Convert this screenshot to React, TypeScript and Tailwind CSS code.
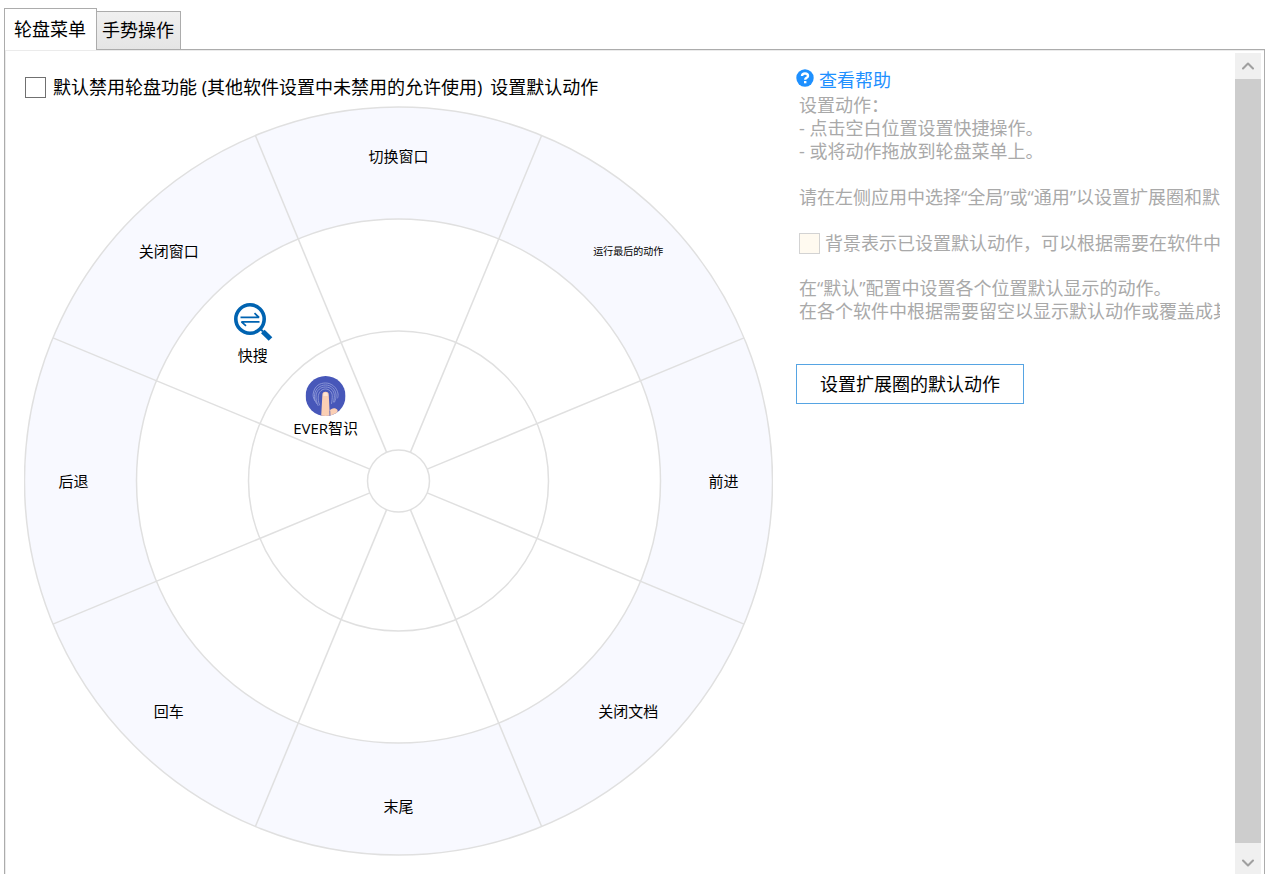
import { useState } from 'react'
import { ChevronDown, ChevronUp } from 'lucide-react'

const CX = 374.5
const CY = 375
const RINGS = [31, 150, 262]
const OUTER = 374
const SPOKES = [22.5, 67.5, 112.5, 157.5, 202.5, 247.5, 292.5, 337.5]

interface WheelItem {
  name: string
  angle: number // degrees, clockwise from the top
  radius: number
  icon?: 'search' | 'touch'
  small?: boolean
}

const items: WheelItem[] = [
  { name: '切换窗口', angle: 0, radius: 325 },
  { name: '运行最后的动作', angle: 45, radius: 325, small: true },
  { name: '前进', angle: 90, radius: 325 },
  { name: '关闭文档', angle: 135, radius: 325 },
  { name: '末尾', angle: 180, radius: 325 },
  { name: '回车', angle: 225, radius: 325 },
  { name: '后退', angle: 270, radius: 325 },
  { name: '关闭窗口', angle: 315, radius: 325 },
  { name: '快搜', angle: 315, radius: 206, icon: 'search' },
  { name: 'EVER智识', angle: 315, radius: 103, icon: 'touch' },
]

function polar(angle: number, radius: number) {
  const rad = (angle * Math.PI) / 180
  return { x: CX + radius * Math.sin(rad), y: CY - radius * Math.cos(rad) }
}

function SearchIcon() {
  return (
    <svg className="w-10 h-10" viewBox="0 0 40 40" fill="none" stroke="#0063b1" aria-hidden="true">
      <circle cx="17" cy="16" r="14.2" strokeWidth="3.6" />
      <path d="M29.800 28.500 37.500 36" strokeWidth="5.200" />
      <path d="M27 25.500 30 28.500" strokeWidth="2" />
      <path d="M7.500 14.300h18.500L21.500 10.200" strokeWidth="1.700" strokeLinejoin="bevel" />
      <path d="M26.500 18.900H8.500l4.500 4" strokeWidth="1.700" strokeLinejoin="bevel" />
    </svg>
  )
}

function TouchIcon() {
  return (
    <svg className="w-10 h-10" viewBox="0 0 40 40" fill="none" aria-hidden="true">
      <defs>
        <clipPath id="touch-clip">
          <circle cx="20" cy="20" r="20" />
        </clipPath>
      </defs>
      <circle cx="20" cy="20" r="20" fill="#4757b9" />
      <g stroke="#98a2dc" strokeWidth="0.8" strokeLinecap="round">
        <path d="M9.500 25c-2-3-2.500-6-1.500-9C9.500 10 14 7 20 7s11.500 4.500 12.500 11c0 2 0 3-.5 4" />
        <path d="M11 27.500c-2-3-2.500-6-2-9 1-6 5.500-9.500 11-9.500s10 4 10.500 10c0 3-.5 4-1.500 7" />
        <path d="M12.500 29.500c-1.500-3-2.500-7-2-10.500 1-5 4.500-8 9.500-8s8.500 3.500 8.800 8.500c0 3-.3 4-.8 6.500" />
        <path d="M14 29c-1.200-3-1.700-6-1.200-9.500.8-4 3.700-6.500 7.200-6.500s6.500 3 6.700 6.500c0 3-.2 5-.7 8" />
      </g>
      <g clipPath="url(#touch-clip)" fill="#fbcfb4">
        <path d="M15.500 42 16.800 19a3.200 3.200 0 0 1 6.400 0l.8 15.500C25.500 32 30 31 32 34v8z" />
        <path d="M17.800 20v-1.200a2.200 2.200 0 0 1 4.400 0V20z" fill="#fde4d3" />
        <path d="M24.200 34.500 24.500 42" stroke="#4757b9" strokeWidth="0.800" />
      </g>
    </svg>
  )
}

function HelpIcon() {
  return (
    <svg className="w-[18px] h-[18px]" viewBox="0 0 18 18" fill="none" aria-hidden="true">
      <circle cx="9" cy="9" r="8.700" fill="#1e90ff" />
      <path d="M6 7C6.100 5.200 7.400 4.500 9 4.500s3 .9 3 2.400c0 2-2.800 1.900-2.800 3.800" stroke="#fff" strokeWidth="2.400" />
      <path d="M8 12h2.400v2.300H8z" fill="#fff" />
    </svg>
  )
}

function Wheel() {
  return (
    <div className="relative w-[749px] h-[750px]">
      <svg className="w-full h-full" viewBox="0 0 749 750" fill="none" stroke="#e0e0e0" strokeWidth="1.500" aria-hidden="true">
        <circle cx={CX} cy={CY} r={OUTER} fill="#f8f9ff" />
        <circle cx={CX} cy={CY} r={RINGS[2]} fill="#fff" />
        <circle cx={CX} cy={CY} r={RINGS[1]} />
        <circle cx={CX} cy={CY} r={RINGS[0]} />
        {SPOKES.map((angle) => {
          const from = polar(angle, RINGS[0])
          const to = polar(angle, OUTER)
          return <line key={angle} x1={from.x} y1={from.y} x2={to.x} y2={to.y} />
        })}
      </svg>
      {items.map((item) => {
        const { x, y } = polar(item.angle, item.radius)
        return (
          <button
            key={item.name}
            type="button"
            className={`absolute -translate-x-1/2 -translate-y-1/2 flex flex-col items-center whitespace-nowrap ${
              item.small ? 'text-[10px] leading-4' : 'text-[15px] leading-6'
            }`}
            style={{ left: x, top: y }}
          >
            {item.icon === 'search' && <SearchIcon />}
            {item.icon === 'touch' && <TouchIcon />}
            {item.name}
          </button>
        )
      })}
    </div>
  )
}

function HelpPanel() {
  return (
    <div className="flex-1 min-w-0 overflow-hidden whitespace-nowrap pt-4">
      <a href="#help" className="flex items-start gap-[5px] pb-[2px] leading-[23px] text-[#1e90ff]">
        <HelpIcon />
        查看帮助
      </a>
      <div className="pl-[3px] leading-[23px] text-[#a9a9a9]">
        <p>设置动作：</p>
        <p>- 点击空白位置设置快捷操作。</p>
        <p>- 或将动作拖放到轮盘菜单上。</p>
        <p className="mt-[23px]">请在左侧应用中选择“全局”或“通用”以设置扩展圈和默认动作。</p>
        <p className="mt-[23px] flex items-center gap-[5px]">
          <span className="w-[21px] h-[21px] shrink-0 border border-[#d3d3d3] bg-[#fffaf0]"></span>
          背景表示已设置默认动作，可以根据需要在软件中覆盖。
        </p>
        <p className="mt-[22px]">在“默认”配置中设置各个位置默认显示的动作。</p>
        <p>在各个软件中根据需要留空以显示默认动作或覆盖成其他动作。</p>
      </div>
      <button type="button" className="mt-[41px] h-10 px-[23px] border border-[#56a4e3] bg-white">
        设置扩展圈的默认动作
      </button>
    </div>
  )
}

function ScrollBar() {
  return (
    <div className="w-[26px] shrink-0 flex flex-col bg-[#f0f0f0] text-[#a0a0a0]">
      <button type="button" aria-label="向上滚动" className="h-[26px] flex items-center justify-center">
        <ChevronUp size={20} strokeWidth={2.5} />
      </button>
      <div className="flex-1 bg-[#cdcdcd]"></div>
      <button type="button" aria-label="向下滚动" className="h-[31px] pt-2 flex items-center justify-center">
        <ChevronDown size={20} strokeWidth={2.5} />
      </button>
    </div>
  )
}

export default function App() {
  const [disabled, setDisabled] = useState(false)

  return (
    <div
      lang="zh-CN"
      className="h-screen overflow-hidden flex flex-col bg-white pt-2 pl-1 pr-[6px] text-[18px] text-black font-['Open_Sans','Noto_Sans_CJK_SC',sans-serif]"
    >
      <div role="tablist" className="flex items-end shrink-0">
        <button
          type="button"
          role="tab"
          aria-selected="true"
          className="relative z-10 -mb-px h-[42px] pl-[9px] pr-[10px] border border-b-0 border-[#acacac] bg-white"
        >
          轮盘菜单
        </button>
        <button
          type="button"
          role="tab"
          aria-selected="false"
          className="h-[38px] pl-[5px] pr-[6px] border border-l-0 border-b-0 border-[#acacac] bg-linear-to-b from-[#f0f0f0] to-[#e5e5e5]"
        >
          手势操作
        </button>
      </div>

      <div className="flex-1 min-h-0 flex gap-[15px] border border-b-0 border-[#acacac] shadow-[inset_1px_1px_0_#ebebeb] pt-[3px] pl-[19px] pr-[3px]">
        <div className="flex-1 min-w-0 flex gap-[23px] overflow-hidden">
          <div className="shrink-0">
            <div className="flex items-center gap-2 h-[53px] pt-[15px] pl-px leading-6">
              <label className="flex items-center gap-[7px]">
                <input
                  type="checkbox"
                  checked={disabled}
                  onChange={(e) => setDisabled(e.target.checked)}
                  className="appearance-none w-[21px] h-[21px] border border-[#707070] bg-white checked:bg-[#707070]"
                />
                默认禁用轮盘功能 (其他软件设置中未禁用的允许使用)
              </label>
              <button type="button">设置默认动作</button>
            </div>
            <Wheel />
          </div>
          <HelpPanel />
        </div>
        <ScrollBar />
      </div>
    </div>
  )
}
